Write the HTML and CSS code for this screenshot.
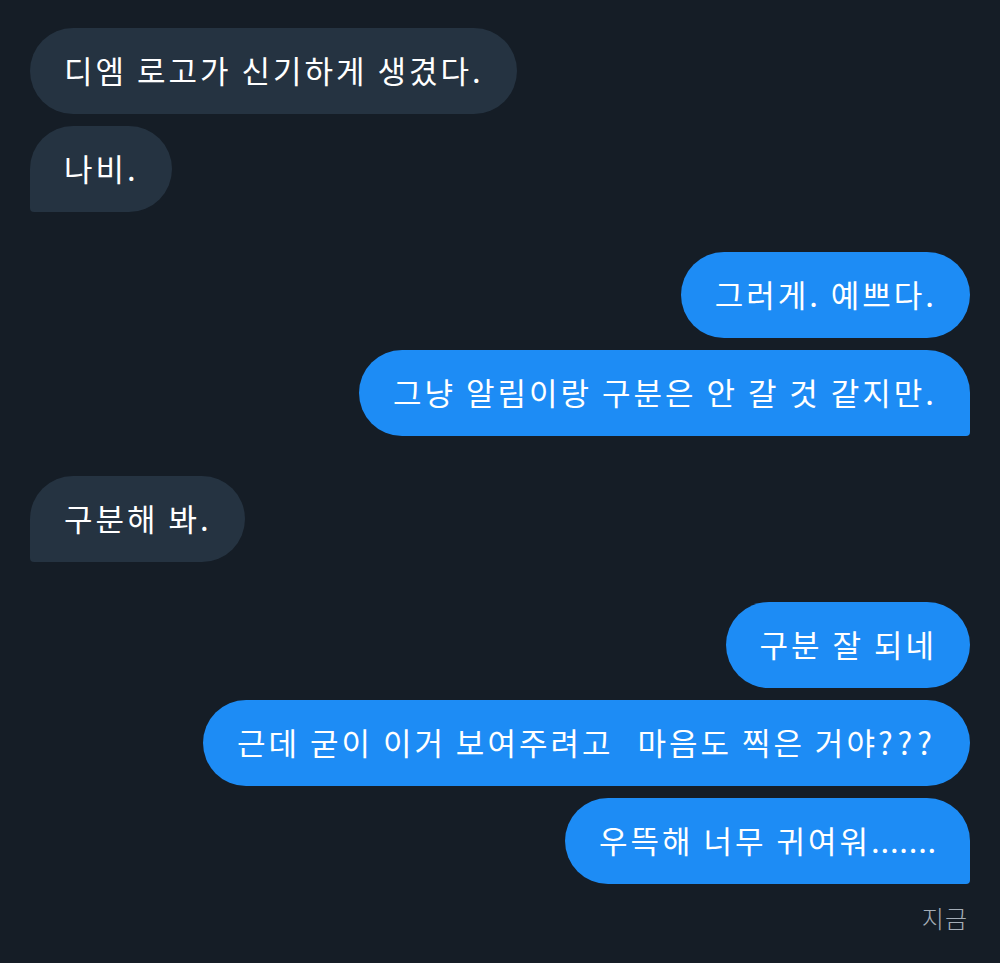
FILE: index.html
```html
<!DOCTYPE html>
<html>

	<head>
		<meta charset="utf-8" />
		<meta name="viewport" content="width=device-width">
		<title>DM</title>
		<link rel="stylesheet" href="styles.css">
	</head>

	<body>
		<div class="chat">
			<div class="group group-in">
				<div class="msg">디엠 로고가 신기하게 생겼다.</div>
				<div class="msg last">나비.</div>
			</div>
			<div class="group group-out">
				<div class="msg">그러게. 예쁘다.</div>
				<div class="msg last">그냥 알림이랑 구분은 안 갈 것 같지만.</div>
			</div>
			<div class="group group-in">
				<div class="msg last">구분해 봐.</div>
			</div>
			<div class="group group-out">
				<div class="msg">구분 잘 되네</div>
				<div class="msg">근데 굳이 이거 보여주려고<span class="wide">&nbsp; </span>마음도 찍은 거야<span class="wide">???</span></div>
				<div class="msg last">우뜩해 너무 귀여워<span class="dots">.......</span></div>
				<div class="time">지금</div>
			</div>
		</div>
	</body>

</html>
```

FILE: styles.css
```css
/*初始化样式*/

* {
	padding: 0;
	margin: 0;
	box-sizing: border-box;
}

html,
body {
	height: 100%;
	background: #151d26;
}

body {
	font-family: "Noto Sans CJK KR", "Noto Sans", sans-serif;
	color: #fff;
}

/*对话*/

.chat {
	display: flex;
	flex-direction: column;
	gap: 40px;
	padding: 28px 30px 0;
}

.group {
	display: flex;
	flex-direction: column;
	gap: 12px;
}

.group-in {
	align-items: flex-start;
}

.group-out {
	align-items: flex-end;
}

.msg {
	height: 86px;
	padding: 0 33px 0 34px;
	border-radius: 43px;
	font-size: 31px;
	font-weight: 400;
	letter-spacing: 3px;
	line-height: 84px;
	white-space: nowrap;
}

.msg .wide {
	letter-spacing: 5px;
}

.msg .dots {
	letter-spacing: 0.8px;
}

.group-in .msg {
	background: #253341;
}

.group-in .last {
	border-bottom-left-radius: 4px;
}

.group-out .msg {
	background: #1d8cf5;
}

.group-out .last {
	border-bottom-right-radius: 4px;
}

.time {
	margin-top: 4px;
	padding-right: 2px;
	font-size: 24px;
	font-weight: 300;
	letter-spacing: 1px;
	color: #a4adb7;
}
```
